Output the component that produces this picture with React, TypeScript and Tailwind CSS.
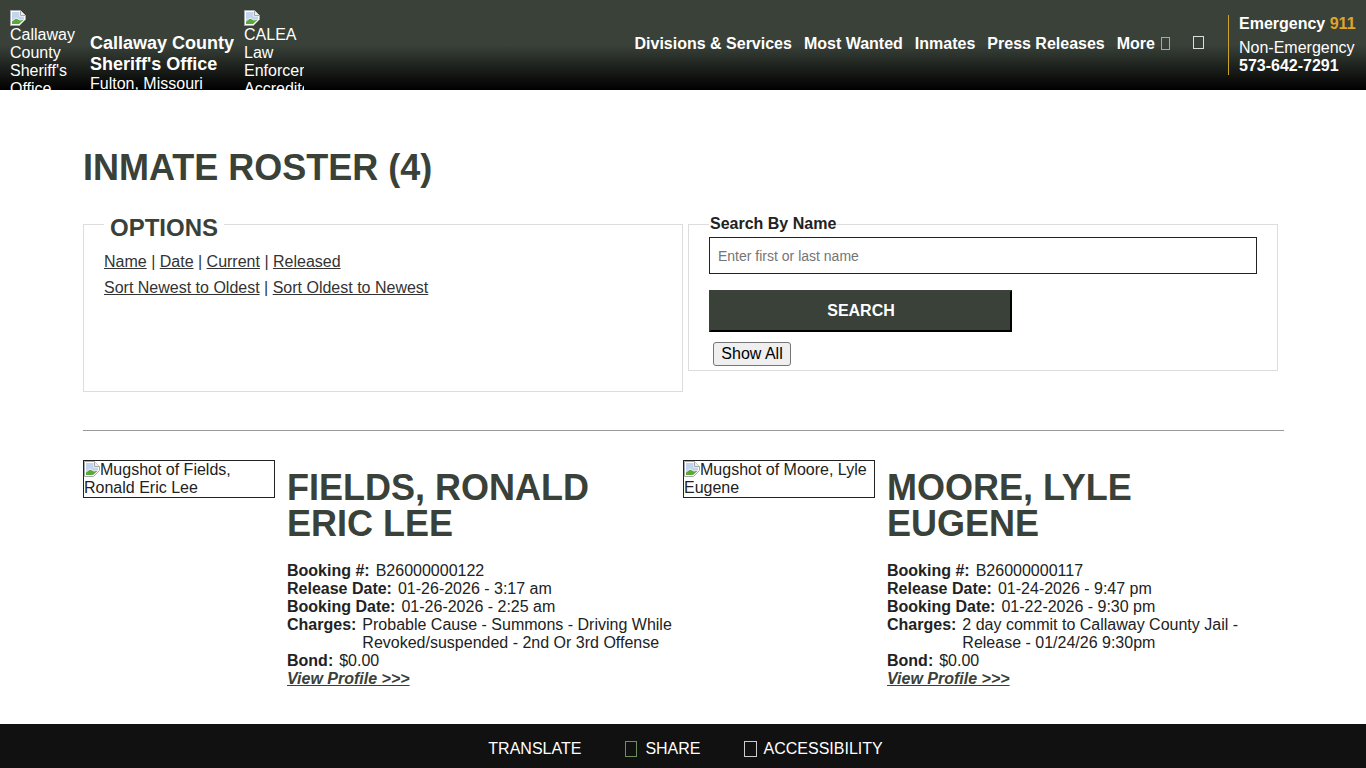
const BrokenImage = () => (
    <svg className="inline-block align-top" width="16" height="16" viewBox="0 0 16 16">
        <path d="M0.5 15.5V0.5H10.5L15.5 5.5V9.5L9.5 15.5Z" fill="#fff" stroke="#a8a8a8" />
        <path d="M10.5 0.5V5.5H15.5" fill="#eee" stroke="#a8a8a8" />
        <path d="M2 2H9.5V6.5H14V9L10 10L6 7.5L2 11Z" fill="#c3d4ee" />
        <path d="M2 14V11.5L6 8.5L10 10.5L14 9.5L9 14Z" fill="#5aa83c" />
    </svg>
);

const Tofu = ({ className }: { className: string }) => (
    <span className={`inline-block border box-border ${className}`} />
);

const inmates = [
    {
        name: 'FIELDS, RONALD ERIC LEE',
        alt: 'Mugshot of Fields, Ronald Eric Lee',
        booking: 'B26000000122',
        release: '01-26-2026 - 3:17 am',
        date: '01-26-2026 - 2:25 am',
        charges: 'Probable Cause - Summons - Driving While Revoked/suspended - 2nd Or 3rd Offense',
    },
    {
        name: 'MOORE, LYLE EUGENE',
        alt: 'Mugshot of Moore, Lyle Eugene',
        booking: 'B26000000117',
        release: '01-24-2026 - 9:47 pm',
        date: '01-22-2026 - 9:30 pm',
        charges: '2 day commit to Callaway County Jail - Release - 01/24/26 9:30pm',
    },
];

const Row = ({ label, value }: { label: string; value: string }) => (
    <div className="flex">
        <span className="font-bold shrink-0 mr-[6px]">{label}</span>
        <span>{value}</span>
    </div>
);

const App = () => {
    return (
        <div className="h-screen overflow-hidden flex flex-col bg-white text-[#222] text-base leading-[18px] font-['Liberation_Sans',Arial,sans-serif]">
            <header className="h-[90px] shrink-0 overflow-hidden flex bg-[linear-gradient(#394139_0%,#394139_50%,#000_100%)] text-white pl-[10px]">
                <div className="w-[70px] pt-[10px] shrink-0">
                    <BrokenImage />
                    <div className="-mt-[2px]">Callaway County Sheriff's Office</div>
                </div>
                <div className="ml-[10px] w-[150px] pt-[33px] shrink-0">
                    <div className="font-bold text-lg leading-[21px]">Callaway County Sheriff's Office</div>
                    <div>Fulton, Missouri</div>
                </div>
                <div className="ml-[4px] w-[60px] pt-[10px] shrink-0 overflow-hidden whitespace-nowrap">
                    <BrokenImage />
                    <div className="-mt-[2px]">CALEA</div>
                    <div>Law</div>
                    <div>Enforcement</div>
                    <div>Accredited</div>
                </div>
                <nav className="ml-auto flex items-center font-bold text-white pb-[3px]">
                    <a className="mr-3">Divisions &amp; Services</a>
                    <a className="mr-3">Most Wanted</a>
                    <a className="mr-3">Inmates</a>
                    <a className="mr-3">Press Releases</a>
                    <a className="flex items-center">More<Tofu className="ml-[6px] w-[9px] h-[13px] border-[#e0a526]" /></a>
                    <Tofu className="ml-[23px] w-[11px] h-[13px] border-[#ddd] -mt-[2px]" />
                </nav>
                <div className="ml-[24px] my-[15px] border-l border-[#c9a227] pl-[10px] w-[138px] shrink-0">
                    <div className="font-bold leading-[18px]">Emergency <span className="text-[#e0a526]">911</span></div>
                    <div className="mt-[6px] leading-[18px]">Non-Emergency</div>
                    <div className="font-bold leading-[18px]">573-642-7291</div>
                </div>
            </header>

            <main className="flex-1 min-h-0 px-[83px]">
                <h1 className="mt-[58px] font-bold text-4xl leading-[40px] text-[#394139]">INMATE ROSTER (4)</h1>

                <div className="flex items-start mt-[18px]">
                    <fieldset className="w-[600px] h-[186px] border border-[#ddd] px-5 shrink-0">
                        <legend className="font-bold text-2xl leading-[28px] pt-[8px] text-[#394139] px-[6px]">OPTIONS</legend>
                        <div className="leading-[26px] mt-[7px] text-[#333]">
                            <div><a className="underline">Name</a> | <a className="underline">Date</a> | <a className="underline">Current</a> | <a className="underline">Released</a></div>
                            <div><a className="underline">Sort Newest to Oldest</a> | <a className="underline">Sort Oldest to Newest</a></div>
                        </div>
                    </fieldset>
                    <fieldset className="ml-[5px] mt-[9px] w-[590px] h-[156px] border border-[#ddd] px-5 shrink-0">
                        <legend className="font-bold leading-[18px] px-[1px]">Search By Name</legend>
                        <input
                            className="block w-[548px] h-[37px] mt-[4px] border border-[#222] px-2 text-sm placeholder:text-[#757575] outline-none"
                            placeholder="Enter first or last name"
                        />
                        <button className="block w-[303px] h-[42px] mt-4 pb-[1px] pl-[1px] bg-[#394139] text-white font-bold border-2 border-[#394139] border-r-black border-b-black">SEARCH</button>
                        <button className="block ml-1 mt-[10px] h-[24px] w-[78px] bg-[#efefef] border border-[#767676] rounded-[3px] text-black">Show All</button>
                    </fieldset>
                </div>

                <hr className="mt-[38px] w-[1201px] border-t border-[#999]" />

                <div className="flex mt-[29px]">
                    {inmates.map((inmate) => (
                        <div key={inmate.name} className="w-[600px] flex shrink-0">
                            <div className="w-[192px] h-[38px] border border-[#222] shrink-0 leading-[18px]">
                                <BrokenImage />{inmate.alt}
                            </div>
                            <div className="ml-3 w-[390px]">
                                <h2 className="font-bold text-4xl leading-[36px] text-[#394139] mt-[10px] mb-[20px] w-[340px]">{inmate.name}</h2>
                                <Row label="Booking #:" value={inmate.booking} />
                                <Row label="Release Date:" value={inmate.release} />
                                <Row label="Booking Date:" value={inmate.date} />
                                <Row label="Charges:" value={inmate.charges} />
                                <Row label="Bond:" value="$0.00" />
                                <a className="font-bold italic underline text-[#394139]">View Profile &gt;&gt;&gt;</a>
                            </div>
                        </div>
                    ))}
                </div>
            </main>

            <footer className="h-[44px] shrink-0 bg-[#111] text-white flex items-center justify-center gap-[44px] pl-[5px] pt-[6px]">
                <span>TRANSLATE</span>
                <span className="flex items-center"><Tofu className="w-[12px] h-[16px] border-[#6d8f5c] mr-[8px]" />SHARE</span>
                <span className="flex items-center -ml-[1px]"><Tofu className="w-[13px] h-[16px] border-[#ccc] mr-[7px]" />ACCESSIBILITY</span>
            </footer>
        </div>
    );
};

export default App;
